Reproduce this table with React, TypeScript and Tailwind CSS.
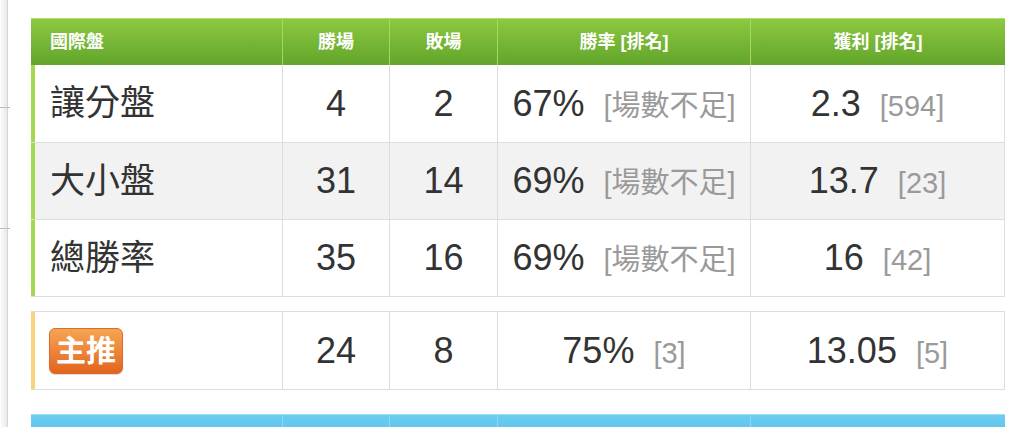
import React from 'react';

type Row = {
  label: string;
  win: string;
  lose: string;
  rate: string;
  rateRank: string;
  profit: string;
  profitRank: string;
  bg: string;
  h: string;
};

const rows: Row[] = [
  { label: '讓分盤', win: '4', lose: '2', rate: '67%', rateRank: '[場數不足]', profit: '2.3', profitRank: '[594]', bg: 'bg-white', h: 'h-[78px]' },
  { label: '大小盤', win: '31', lose: '14', rate: '69%', rateRank: '[場數不足]', profit: '13.7', profitRank: '[23]', bg: 'bg-[#f2f2f2]', h: 'h-[77px]' },
  { label: '總勝率', win: '35', lose: '16', rate: '69%', rateRank: '[場數不足]', profit: '16', profitRank: '[42]', bg: 'bg-white', h: 'h-[77px]' },
];

const cols = 'grid grid-cols-[252px_107px_108px_253px_254px]';
const font = { fontFamily: '"Liberation Sans", "Noto Sans CJK TC", sans-serif' };

const Value: React.FC<{ main: string; rank: string }> = ({ main, rank }) => (
  <div className="flex items-baseline justify-center">
    <span className="text-[36px] text-[#333]">{main}</span>
    <span className="ml-[19px] text-[29px] text-[#9a9a9a]">{rank}</span>
  </div>
);

const App: React.FC = () => {
  return (
    <div className="flex h-[427px] w-[1015px] overflow-hidden bg-white" style={font}>
      <div className="flex w-[8px] shrink-0 flex-col border-r border-[#d6d6d6] bg-linear-to-r from-[#fdfdfd] to-[#e9e9e9]">
        <div className="mt-[107px] h-px w-[10px] bg-[#bdbdbd]" />
        <div className="mt-[120px] h-px w-[10px] bg-[#bdbdbd]" />
      </div>

      <div className="ml-[23px] mt-[18px] w-[974px]">
        {/* 國際盤 header */}
        <div className={`${cols} h-[47px] border-t border-[#b2de6c] bg-linear-to-b from-[#8dc940] to-[#62a52b] text-[18px] font-bold text-white`}>
          <div className="flex items-center border-r border-[#a6d766] pl-[19px]">國際盤</div>
          <div className="flex items-center justify-center border-r border-[#a6d766]">勝場</div>
          <div className="flex items-center justify-center border-r border-[#a6d766]">敗場</div>
          <div className="flex items-center justify-center border-r border-[#a6d766]">勝率 [排名]</div>
          <div className="flex items-center justify-center">獲利 [排名]</div>
        </div>

        {rows.map((r) => (
          <div key={r.label} className={`${cols} ${r.h} border-b border-[#dddddd] ${r.bg}`}>
            <div className="flex items-center border-l-4 border-r border-l-[#a4d94f] border-r-[#dddddd] pl-[15px] text-[35px] text-[#333]">
              {r.label}
            </div>
            <div className="flex items-center justify-center border-r border-[#dddddd] text-[36px] text-[#333]">{r.win}</div>
            <div className="flex items-center justify-center border-r border-[#dddddd] text-[36px] text-[#333]">{r.lose}</div>
            <div className="flex items-center justify-center border-r border-[#dddddd]">
              <Value main={r.rate} rank={r.rateRank} />
            </div>
            <div className="flex items-center justify-center border-r border-[#dddddd]">
              <Value main={r.profit} rank={r.profitRank} />
            </div>
          </div>
        ))}

        {/* 主推 */}
        <div className={`${cols} mt-[14px] h-[79px] border-y border-[#dddddd] bg-white`}>
          <div className="flex items-center border-l-4 border-r border-l-[#f8d47c] border-r-[#dddddd] pl-[14px]">
            <div className="flex h-[46px] w-[74px] items-center justify-center rounded-[6px] border border-[#dc6a2a] bg-linear-to-b from-[#f6a452] to-[#e2641d] text-[30px] font-bold text-white shadow-[0_1px_1px_rgba(0,0,0,0.15)]">
              主推
            </div>
          </div>
          <div className="flex items-center justify-center border-r border-[#dddddd] text-[36px] text-[#333]">24</div>
          <div className="flex items-center justify-center border-r border-[#dddddd] text-[36px] text-[#333]">8</div>
          <div className="flex items-center justify-center border-r border-[#dddddd]">
            <Value main="75%" rank="[3]" />
          </div>
          <div className="flex items-center justify-center border-r border-[#dddddd]">
            <Value main="13.05" rank="[5]" />
          </div>
        </div>

        {/* next section header (blue) */}
        <div className={`${cols} mt-[24px] h-[47px] border-t border-[#9de0f6] bg-linear-to-b from-[#6ccdf1] to-[#48b3e2]`}>
          <div className="border-r border-[#8ed8f3]" />
          <div className="border-r border-[#8ed8f3]" />
          <div className="border-r border-[#8ed8f3]" />
          <div className="border-r border-[#8ed8f3]" />
          <div />
        </div>
      </div>
    </div>
  );
};

export default App;
